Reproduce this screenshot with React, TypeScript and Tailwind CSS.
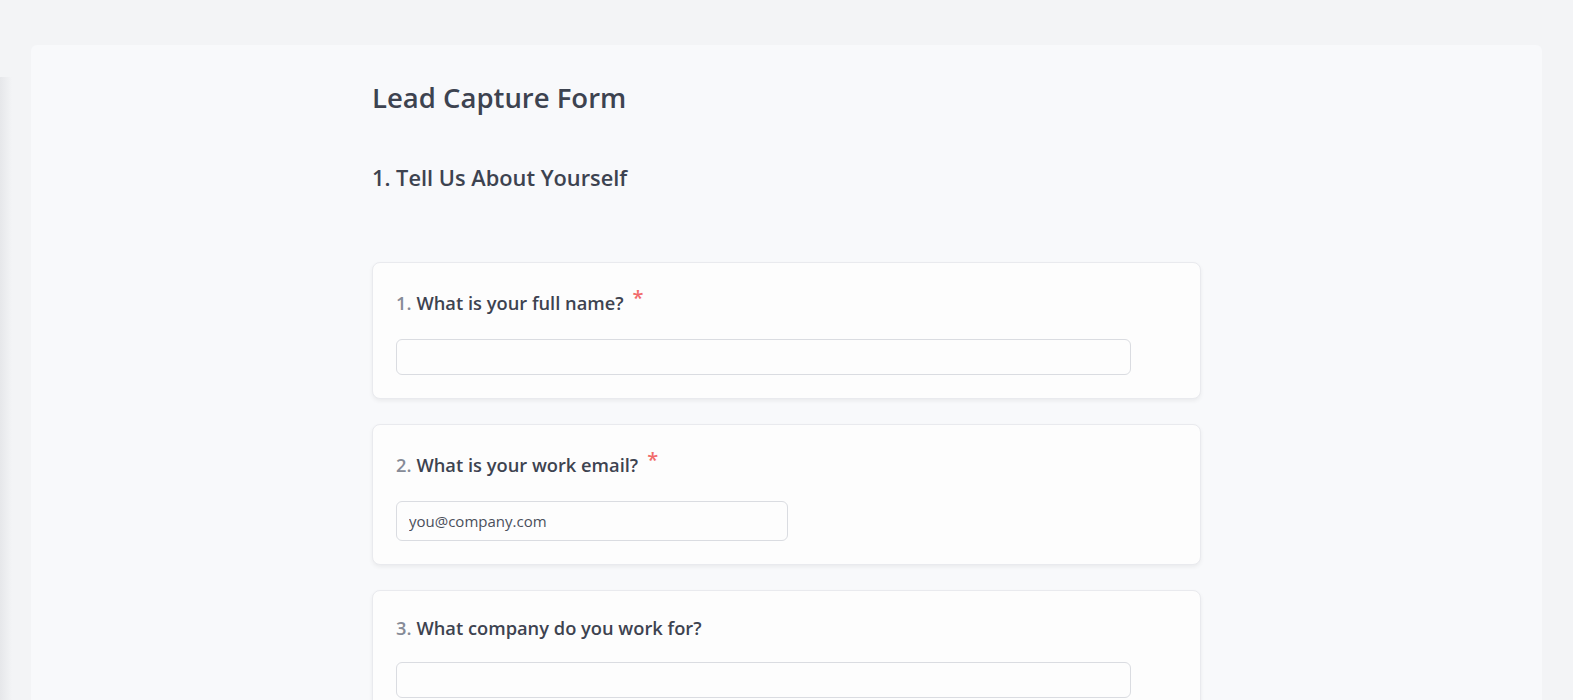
const font = { fontFamily: '"Open Sans", "Noto Sans", Arial, sans-serif' }

type Question = {
  num: number
  label: string
  required?: boolean
  placeholder?: string
  inputClass: string
}

const questions: Array<Question> = [
  { num: 1, label: "What is your full name?", required: true, inputClass: "w-[735px] h-[36px]" },
  {
    num: 2,
    label: "What is your work email?",
    required: true,
    placeholder: "you@company.com",
    inputClass: "w-[392px] h-[40px]",
  },
  { num: 3, label: "What company do you work for?", inputClass: "w-[735px] h-[36px]" },
]

function QuestionCard({ q }: { q: Question }) {
  return (
    <div className="rounded-lg border border-[#e9eaee] bg-[#fdfdfd] px-[23px] pt-[24px] pb-[23px] shadow-[0_2px_4px_rgba(0,0,0,0.06)]">
      <div className="flex items-center text-[18.3px] font-semibold leading-[26px] text-[#3d4350]">
        <span className="mr-[5px] text-[#868b97]">{q.num}.</span>
        <span>{q.label}</span>
        {q.required ? (
          <span className="ml-[9px] h-[31px] self-start text-[20px] font-semibold leading-[22px] text-[#f16b6b]">*</span>
        ) : null}
      </div>
      <input
        className={`mt-[21px] block rounded-md border border-[#dadce1] bg-[#fdfdfd] px-[12px] text-[15px] text-[#4a4f5b] outline-none placeholder:text-[#4a4f5b] ${q.inputClass}`}
        placeholder={q.placeholder}
        style={font}
      />
    </div>
  )
}

export default function App() {
  return (
    <div className="flex h-screen w-full overflow-hidden bg-white" style={font}>
      <div className="relative flex h-full w-[1573px] flex-col bg-[#f3f4f6] px-[31px] pt-[45px]">
        <div className="absolute bottom-0 left-0 top-[77px] w-[12px] bg-gradient-to-r from-[#e6e7ea] to-transparent" />
        <div className="flex-1 rounded-t-md bg-[#f8f9fb]">
          <div className="mx-auto w-[829px] pt-[35px]">
            <h1 className="text-[27.5px] font-semibold leading-[36px] text-[#3d4350]">Lead Capture Form</h1>
            <h2 className="mt-[47px] text-[21.8px] font-semibold leading-[30px] text-[#3d4350]">
              1. Tell Us About Yourself
            </h2>
            <div className="mt-[69px] flex flex-col gap-[25px]">
              {questions.map((q) => (
                <QuestionCard key={q.num} q={q} />
              ))}
            </div>
          </div>
        </div>
      </div>
    </div>
  )
}
